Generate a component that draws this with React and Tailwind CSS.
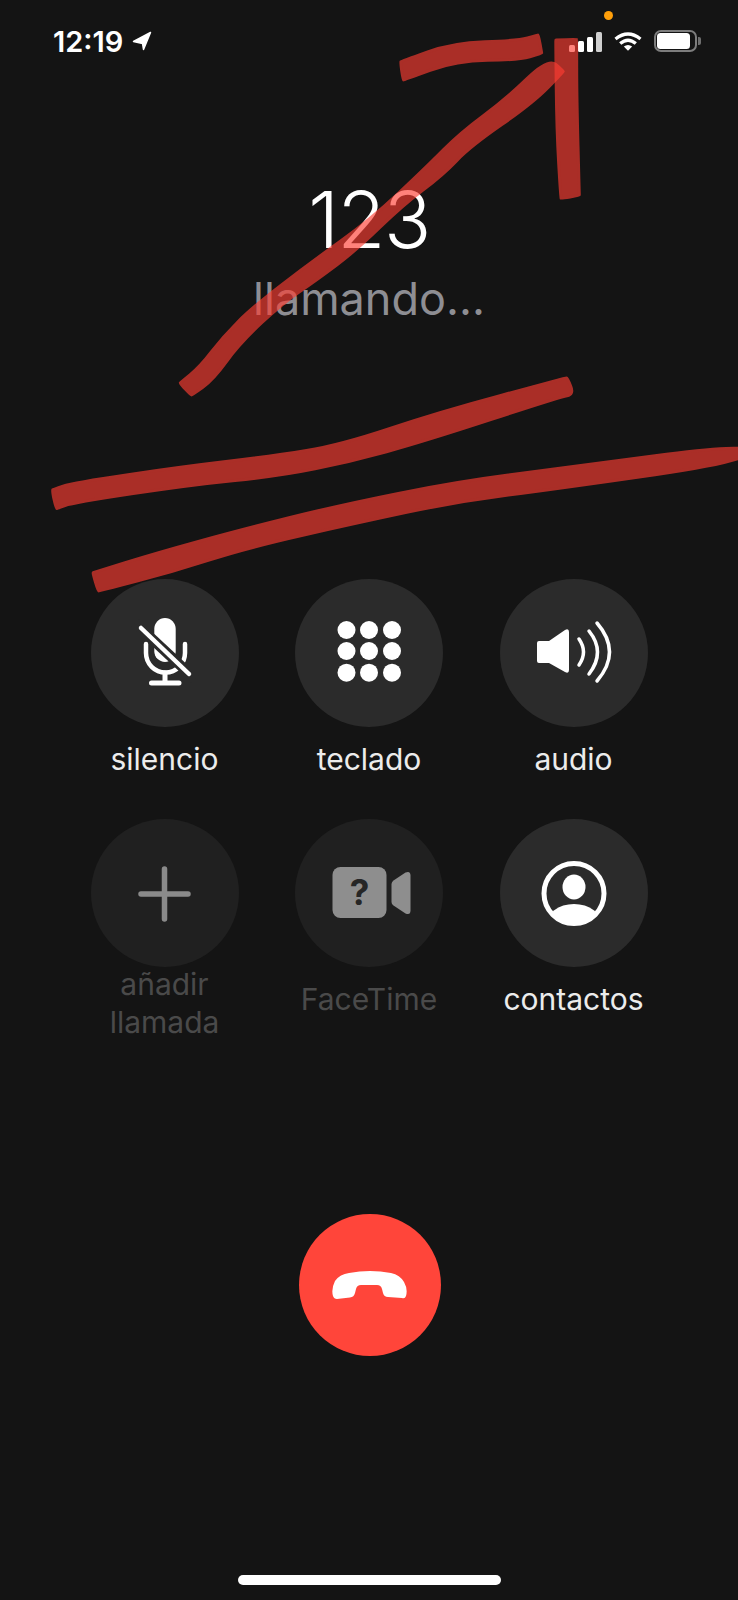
import React from "react";

const smooth = (p) => {
  const n = p.length;
  const mid = (a, b) => [(a[0] + b[0]) / 2, (a[1] + b[1]) / 2];
  const s = mid(p[n - 1], p[0]);
  let d = `M${s[0]} ${s[1]}`;
  for (let i = 0; i < n; i++) {
    const m = mid(p[i], p[(i + 1) % n]);
    d += ` Q${p[i][0]} ${p[i][1]} ${m[0]} ${m[1]}`;
  }
  return d + "Z";
};

const strokes = [
  [[52,490],[53,489.500],[73,482.700],[183,466.700],[273,456],[340,445],[440,411.700],[560,379.500],[566,378],[567.500,378],[574,394.500],[560,397],[423,441.700],[350,461.700],[280,476],[190,485],[73,502.700],[57,508.500],[56,508.500]],
  [[92.700,572.700],[93.500,572.500],[156.700,553],[240,530],[340,505],[456.700,481.700],[560,468.300],[750,443],[750,461],[560,488.300],[456.700,501.700],[356.700,523],[246.700,548],[173,571.700],[99,591],[98,591]],
  [[548.300,58],[506.700,98.300],[460,133],[426.700,166.700],[370,220],[310,263],[253,306.700],[223,336.700],[200,366.700],[180.500,382.500],[180,383.500],[191,395],[192,395],[213,380],[240,343],[283,303],[316.700,280],[356.700,250],[403,205],[443,175],[470,146.700],[533,103],[563.300,72],[563.300,71]],
  [[400.500,62],[401,61.500],[453,42.700],[517,40.700],[538,35],[538.500,35],[541.700,53],[541.700,53.500],[518,60],[456.700,60.700],[403.500,80],[403,80]],
  [[555.700,40],[556,40],[576.500,39.300],[576.700,39.500],[576.700,96.700],[579.300,195],[579.300,195.500],[561,198.300],[560.700,198],[556.700,130]],
];

const Mic = () => (
  <svg viewBox="0 0 148 148" className="w-[148px] h-[148px]">
    <rect x="63.300" y="39" width="21.400" height="44" rx="10.700" fill="#fff" />
    <path d="M55 65v9a19.500 19.500 0 0 0 39 0v-9" fill="none" stroke="#fff" strokeWidth="4.500" strokeLinecap="round" />
    <path d="M74 94v10M60.500 104H88" stroke="#fff" strokeWidth="5" strokeLinecap="round" fill="none" />
    <path d="M44 44L104 100" stroke="#2b2b2b" strokeWidth="10.500" />
    <path d="M50 49L98 95" stroke="#fff" strokeWidth="4.500" strokeLinecap="round" />
  </svg>
);

const Keypad = () => (
  <svg viewBox="0 0 148 148" className="w-[148px] h-[148px]" fill="#fff">
    {[51, 72, 93.7].flatMap((y) =>
      [51.5, 74, 97].map((x) => <circle key={`${x}-${y}`} cx={x} cy={y} r="9" />)
    )}
  </svg>
);

const Speaker = () => (
  <svg viewBox="0 0 148 148" className="w-[148px] h-[148px]">
    <path d="M37 64q0-2 2-2h10l16-11q4-2 4 2v38q0 4-4 2L49 84H39q-2 0-2-2Z" fill="#fff" />
    <g fill="none" stroke="#fff" strokeLinecap="round">
      <path d="M79 60q9 13 0 26" strokeWidth="3.500" />
      <path d="M89 52q17 21 0 43" strokeWidth="3.500" />
      <path d="M97 44q25 29 0 58" strokeWidth="3.500" />
    </g>
  </svg>
);

const Plus = () => (
  <svg viewBox="0 0 148 148" className="w-[148px] h-[148px]">
    <path d="M50 75H97M73.500 50V100" stroke="#8a8a8a" strokeWidth="5.500" strokeLinecap="round" />
  </svg>
);

const Video = () => (
  <svg viewBox="0 0 148 148" className="w-[148px] h-[148px]">
    <rect x="37.500" y="48" width="54" height="51" rx="8" fill="#8e8e8e" />
    <path d="M96.500 65q0-2 2-3.500l12-8q5-2 5 3v35q0 5-5 3l-12-8q-2-1.500-2-3.500Z" fill="#8e8e8e" />
    <text x="64.500" y="86" textAnchor="middle" fontSize="35" fontWeight="700" fill="#262626" fontFamily="Inter, sans-serif">?</text>
  </svg>
);

const Contact = () => (
  <svg viewBox="0 0 148 148" className="w-[148px] h-[148px]">
    <defs>
      <clipPath id="cc"><circle cx="74" cy="74.500" r="31" /></clipPath>
    </defs>
    <circle cx="74" cy="74.500" r="30" fill="none" stroke="#fff" strokeWidth="5" />
    <ellipse cx="74" cy="68" rx="11.500" ry="12.500" fill="#fff" />
    <g clipPath="url(#cc)"><ellipse cx="74" cy="106" rx="28" ry="21" fill="#fff" /></g>
  </svg>
);

const HangUp = () => (
  <svg viewBox="0 0 142 142" className="w-[142px] h-[142px]">
    <path d="M34 82Q32 75 36 67Q41 60 50 59Q71 55 92 59Q101 61 105 68Q109 75 107 82Q106 85 103 84L89 83Q85 83 84 79L83 75Q82 71 78 71H62Q58 71 57 75L56 79Q55 83 51 83.500L38 85Q35 85 34 82Z" fill="#fff" />
  </svg>
);

const buttons = [
  { label: ["silencio"], Icon: Mic },
  { label: ["teclado"], Icon: Keypad },
  { label: ["audio"], Icon: Speaker },
  { label: ["añadir", "llamada"], Icon: Plus, off: true },
  { label: ["FaceTime"], Icon: Video, off: true },
  { label: ["contactos"], Icon: Contact },
];

export default function App() {
  return (
    <div className="relative w-[738px] h-[1600px] overflow-hidden bg-[#141414] flex flex-col font-['Inter',sans-serif]">
      <div className="h-[82px] flex items-center justify-between pl-[53px] pr-[37px] shrink-0">
        <div className="flex items-center gap-[9px]">
          <span className="text-white font-semibold text-[29px] leading-none">12:19</span>
          <svg viewBox="0 0 20 20" className="w-[20px] h-[20px]">
            <path d="M18.500 1.500L1.500 10.500L10.500 12.500L11.500 18.500Z" fill="#fff" stroke="#fff" strokeWidth="1.500" strokeLinejoin="round" />
          </svg>
        </div>
        <div className="flex items-center">
          <div className="flex items-end gap-[3px] h-[20px] mt-[1px]">
            <div className="w-[6px] h-[7px] rounded-[1.500px] bg-white" />
            <div className="w-[6px] h-[11px] rounded-[1.500px] bg-white" />
            <div className="w-[6px] h-[15px] rounded-[1.500px] bg-white" />
            <div className="w-[6px] h-[20px] rounded-[1.500px] bg-[#cfcfcf]" />
          </div>
          <svg viewBox="0 0 28 19" className="w-[28px] h-[19px] ml-[12px]" fill="none" stroke="#fff" strokeWidth="3.300">
            <path d="M1.500 7Q14 -3 26.500 7" />
            <path d="M6.200 11.600Q14 4.800 21.800 11.600" />
            <path d="M14 18.800L9.800 14.600Q14 11.600 18.200 14.600Z" fill="#fff" stroke="none" />
          </svg>
          <div className="ml-[12px] w-[43px] h-[22px] rounded-[7px] border-[2px] border-[#7d7d7d] p-[1px] flex">
            <div className="w-[33px] h-full rounded-[3.500px] bg-white" />
          </div>
          <div className="w-[3px] h-[8px] ml-[1px] rounded-r-[2px] bg-[#6f6f6f]" />
        </div>
      </div>

      <div className="mt-[93px] flex flex-col items-center">
        <div className="text-white text-[78px] leading-[90px] font-light tracking-[-1.500px]">123</div>
        <div className="text-[#8e8e93] text-[45px] leading-[60px] mt-[4px] font-normal">llamando...</div>
      </div>

      <div className="mt-[250px] w-[613.500px] self-center grid grid-cols-3 auto-rows-[240px] shrink-0">
        {buttons.map(({ label, Icon, off }) => (
          <div key={label[0]} className="flex flex-col items-center">
            <div className={`w-[148px] h-[148px] rounded-full shrink-0 ${off ? "bg-[#202020]" : "bg-[#2b2b2b]"}`}>
              <Icon />
            </div>
            <div className={`h-[64px] flex flex-col items-center justify-center text-[30px] leading-[38px] text-center ${off ? "text-[#4a4a4a]" : "text-[#ececec]"} ${label.length > 1 ? "mt-[4px]" : ""}`}>
              {label.map((l) => <span key={l}>{l}</span>)}
            </div>
          </div>
        ))}
      </div>

      <div className="mt-[155px] ml-[2px] self-center w-[142px] h-[142px] rounded-full bg-[#ff453a] shrink-0">
        <HangUp />
      </div>

      <div className="mt-auto mb-[15px] self-center w-[263px] h-[10px] rounded-full bg-white shrink-0" />

      <div className="absolute left-[603.500px] top-[10.500px] w-[9px] h-[9px] rounded-full bg-[#ff9f0a]" />

      <svg viewBox="0 0 738 1600" className="absolute inset-0 w-[738px] h-[1600px] pointer-events-none">
        {strokes.map((p, i) => (
          <path key={i} d={smooth(p)} fill="#ff3d32" stroke="#ff3d32" strokeWidth="3" strokeLinejoin="round" opacity="0.64" />
        ))}
      </svg>
    </div>
  );
}
